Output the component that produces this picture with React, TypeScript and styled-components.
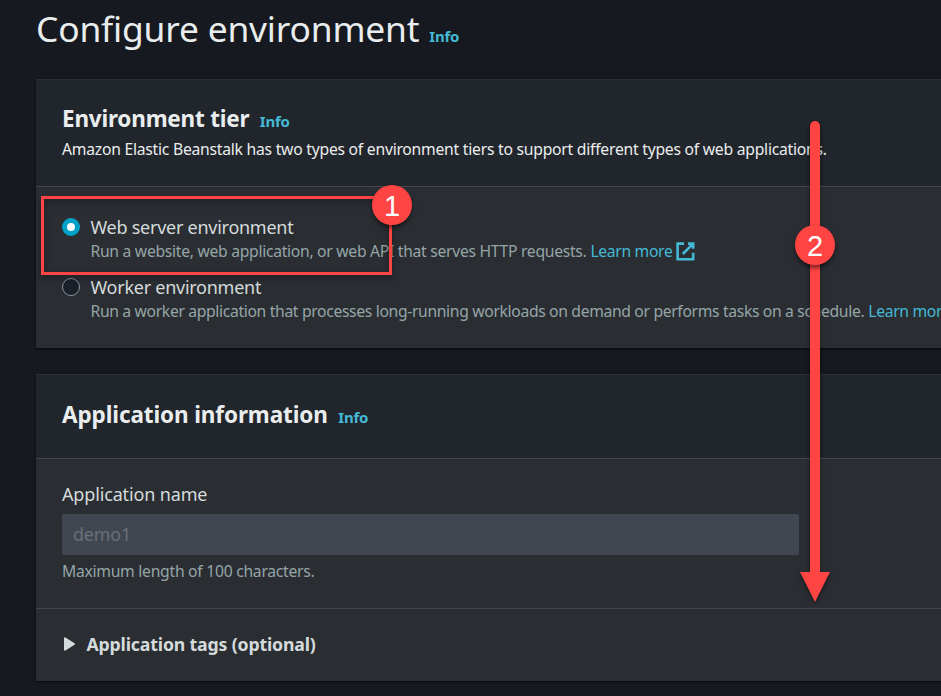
import React from "react";
import styled, { createGlobalStyle, css } from "styled-components";

const colors = {
  page: "#16191f",
  header: "#21252c",
  body: "#2a2e33",
  divider: "#414750",
  heading: "#eaeded",
  text: "#d5dbdb",
  muted: "#95a5a6",
  link: "#44b9d6",
  accent: "#00a1c9",
  mark: "#ff4444",
};

const GlobalStyle = createGlobalStyle`
  * { box-sizing: border-box; }
  html, body { margin: 0; background: ${colors.page}; overflow: hidden; }
  body { font-family: "Noto Sans", "Open Sans", sans-serif; color: ${colors.text}; }
  h1, h2, p { margin: 0; }
`;

const Page = styled.main`
  position: relative;
  width: 941px;
  height: 696px;
  overflow: hidden;
  white-space: nowrap;
  background: ${colors.page};
`;

const Content = styled.div`
  display: flex;
  flex-direction: column;
  width: 1100px;
  padding-left: 36px;
`;

const TitleRow = styled.header`
  display: flex;
  align-items: baseline;
  gap: 10px;
  height: 79px;
  padding-top: 4px;
`;

const Title = styled.h1`
  font-size: 35.4px;
  font-weight: 400;
  line-height: 48px;
  letter-spacing: -0.2px;
  color: ${colors.heading};
`;

const InfoLink = styled.a`
  font-size: 15px;
  font-weight: 700;
  line-height: 20px;
  letter-spacing: -0.25px;
  color: ${colors.link};
`;

const Panel = styled.section`
  display: flex;
  flex-direction: column;
  margin-bottom: 26px;
  border-top: 1px solid #2b3036;
  background: ${colors.body};
  box-shadow: 0 1px 2px rgba(0, 0, 0, 0.75);
`;

const PanelHeader = styled.div<{ $pad: string }>`
  display: flex;
  flex-direction: column;
  gap: 6px;
  padding: ${(p) => p.$pad};
  border-bottom: 1px solid ${colors.divider};
  background: ${colors.header};
`;

const HeadingRow = styled.div`
  display: flex;
  align-items: baseline;
  gap: 10.5px;
  height: 28px;
`;

const Heading = styled.h2<{ $track: number }>`
  font-size: 22.5px;
  font-weight: 700;
  line-height: 28px;
  letter-spacing: ${(p) => p.$track}px;
  color: ${colors.heading};
`;

const Intro = styled.p`
  font-size: 15.7px;
  line-height: 20px;
  letter-spacing: -0.24px;
  color: ${colors.heading};
`;

const RadioGroup = styled.div`
  display: flex;
  flex-direction: column;
  gap: 12px;
  padding: 28px 26px 25px;
`;

const RadioOption = styled.label`
  display: flex;
  gap: 10.5px;
`;

const RadioDot = styled.span<{ $on?: boolean }>`
  flex: none;
  width: 18px;
  height: 18px;
  margin-top: 3px;
  border-radius: 50%;
  ${(p) =>
    p.$on
      ? css`
          border: 5px solid ${colors.accent};
          background: #fff;
        `
      : css`
          border: 1.3px solid #879596;
          background: #1a2029;
        `}
`;

const OptionText = styled.div`
  display: flex;
  flex-direction: column;
`;

const Label = styled.span<{ $track?: number }>`
  font-size: 18px;
  line-height: 24px;
  letter-spacing: ${(p) => p.$track ?? -0.15}px;
  color: ${colors.text};
`;

const Hint = styled.span<{ $track?: number }>`
  font-size: 15.7px;
  line-height: 24px;
  letter-spacing: ${(p) => p.$track ?? -0.27}px;
  color: ${colors.muted};
`;

const OptionLine = styled.div`
  display: flex;
  align-items: center;
  gap: 4px;
  height: 24px;
`;

const LearnMore = styled.a`
  display: flex;
  align-items: center;
  gap: 3px;
  font-size: 15.7px;
  line-height: 24px;
  letter-spacing: -0.33px;
  color: ${colors.link};
`;

const LinkIcon = styled.svg`
  width: 20.8px;
  height: 20.8px;
  fill: none;
  stroke: ${colors.link};
  stroke-width: 2;
`;

const Field = styled.div`
  display: flex;
  flex-direction: column;
  padding: 23px 26px 25px;
`;

const Input = styled.input`
  width: 737px;
  height: 41px;
  margin: 8px 0 4px;
  padding: 0 11px 1px;
  border: 0;
  border-radius: 2px;
  background: #414750;
  font: 400 17.8px "Noto Sans", sans-serif;
  letter-spacing: -0.1px;
  color: #687078;
`;

const Expander = styled.div`
  display: flex;
  align-items: center;
  gap: 11.5px;
  padding: 23px 26px 25px 28px;
  border-top: 1px solid ${colors.divider};
  font-size: 17.7px;
  font-weight: 700;
  line-height: 24px;
  letter-spacing: -0.16px;
`;

const Caret = styled.svg`
  width: 11px;
  height: 14px;
  fill: ${colors.text};
`;

const Highlight = styled.div`
  position: absolute;
  left: 41px;
  top: 196px;
  width: 351px;
  height: 79px;
  border: 3px solid ${colors.mark};
  filter: drop-shadow(0 3px 3px rgba(0, 0, 0, 0.5));
`;

const Arrow = styled.svg`
  position: absolute;
  left: 790px;
  top: 115px;
  width: 50px;
  height: 500px;
  fill: ${colors.mark};
  filter: drop-shadow(0 2px 2px rgba(0, 0, 0, 0.5));
`;

const Badge = styled.div<{ $x: number; $y: number }>`
  position: absolute;
  left: ${(p) => p.$x}px;
  top: ${(p) => p.$y}px;
  display: grid;
  place-items: center;
  width: 40px;
  height: 40px;
  border-radius: 50%;
  background: ${colors.mark};
  box-shadow: 0 3px 4px rgba(0, 0, 0, 0.5);
  font: 400 29px/42px "Liberation Sans", Arial, sans-serif;
  color: #fff;
`;

function ExternalLink() {
  return (
    <LearnMore>
      Learn more
      <LinkIcon viewBox="0 0 16 16" aria-hidden="true">
        <path d="M10 2h4v4M6 10l8-8M14 9.05V14H2V2h5" />
      </LinkIcon>
    </LearnMore>
  );
}

interface OptionProps {
  selected?: boolean;
  title: string;
  description: string;
  track: number;
}

function Option({ selected, title, description, track }: OptionProps) {
  return (
    <RadioOption>
      <RadioDot $on={selected} role="radio" aria-checked={!!selected} />
      <OptionText>
        <Label $track={-0.26}>{title}</Label>
        <OptionLine>
          <Hint $track={track}>{description}</Hint>
          <ExternalLink />
        </OptionLine>
      </OptionText>
    </RadioOption>
  );
}

export default function App() {
  return (
    <Page>
      <GlobalStyle />
      <Content>
        <TitleRow>
          <Title>Configure environment</Title>
          <InfoLink>Info</InfoLink>
        </TitleRow>

        <Panel>
          <PanelHeader $pad="25px 26px 27px">
            <HeadingRow>
              <Heading $track={-0.21}>Environment tier</Heading>
              <InfoLink>Info</InfoLink>
            </HeadingRow>
            <Intro>
              Amazon Elastic Beanstalk has two types of environment tiers to support different types of web
              applications.
            </Intro>
          </PanelHeader>
          <RadioGroup role="radiogroup">
            <Option
              selected
              title="Web server environment"
              description="Run a website, web application, or web API that serves HTTP requests."
              track={-0.29}
            />
            <Option
              title="Worker environment"
              description="Run a worker application that processes long-running workloads on demand or performs tasks on a schedule."
              track={-0.339}
            />
          </RadioGroup>
        </Panel>

        <Panel>
          <PanelHeader $pad="26px 26px 29px">
            <HeadingRow>
              <Heading $track={-0.11}>Application information</Heading>
              <InfoLink>Info</InfoLink>
            </HeadingRow>
          </PanelHeader>
          <Field>
            <Label>Application name</Label>
            <Input value="demo1" readOnly aria-label="Application name" />
            <Hint>Maximum length of 100 characters.</Hint>
          </Field>
          <Expander>
            <Caret viewBox="0 0 11 14" aria-hidden="true">
              <path d="M0 1.2C0 .3.8-.1 1.5.4L10.5 6.3Q11.3 7 10.5 7.7L1.5 13.6C.8 14.1 0 13.7 0 12.8Z" />
            </Caret>
            Application tags (optional)
          </Expander>
        </Panel>
      </Content>

      <Highlight />
      <Arrow viewBox="0 0 50 500" aria-hidden="true">
        <path d="M20 11a5 5 0 0 1 10 0V457H40L25 487 10 457H20Z" />
      </Arrow>
      <Badge $x={372} $y={185}>1</Badge>
      <Badge $x={795} $y={225}>2</Badge>
    </Page>
  );
}
